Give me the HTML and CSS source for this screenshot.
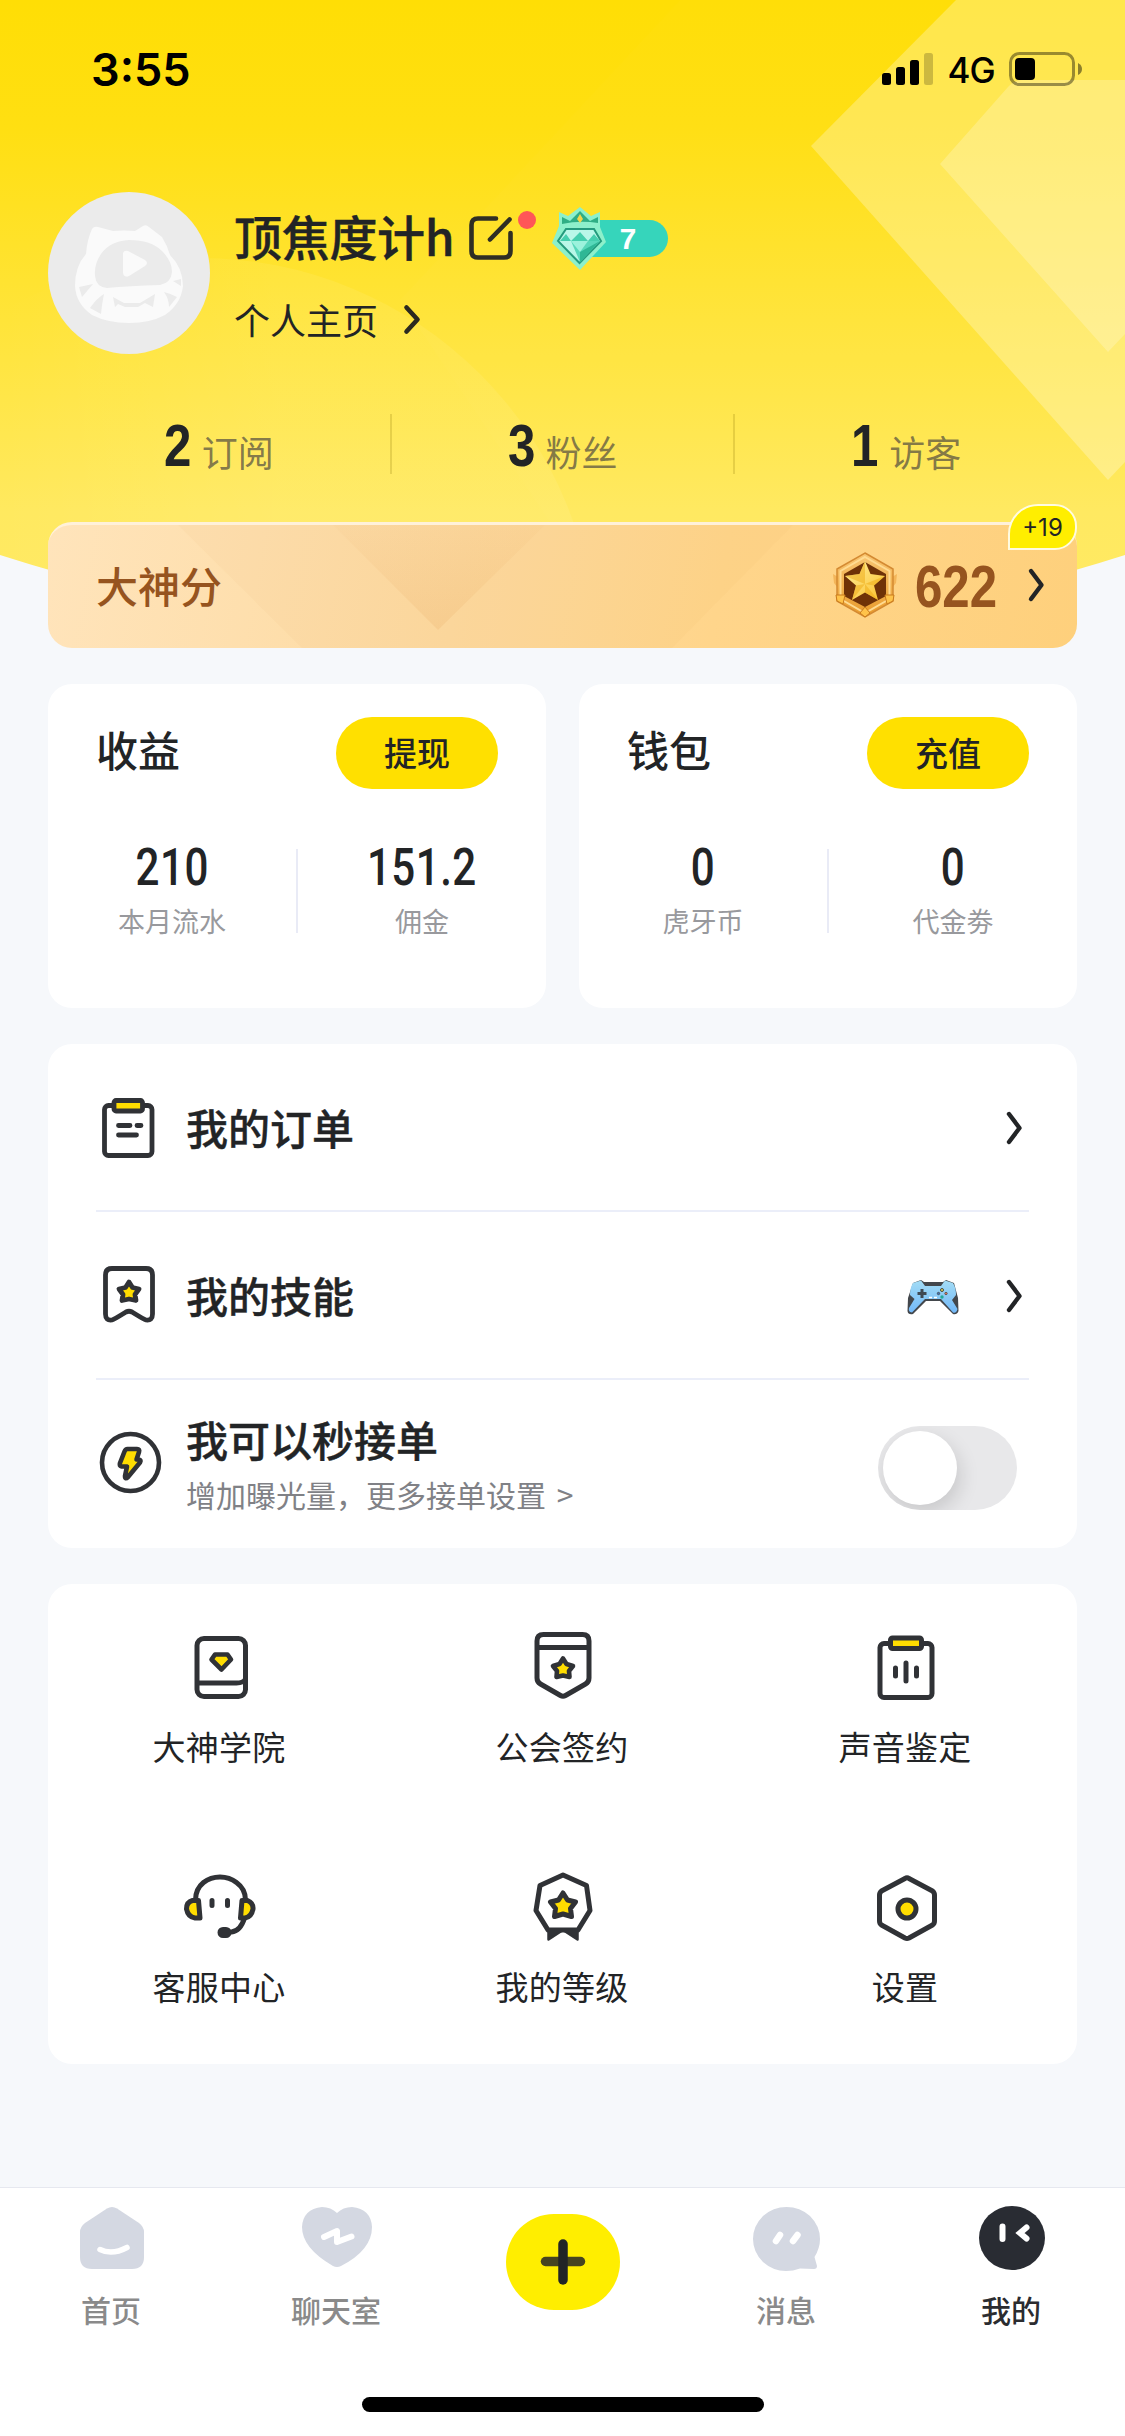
FILE: index.html
```html
<!DOCTYPE html>
<html lang="zh-CN">
<head>
<meta charset="utf-8">
<title>我的</title>
<link rel="stylesheet" href="styles.css">
</head>
<body>
<div class="page">
  <svg class="backdrop" viewBox="0 0 1125 640" aria-hidden="true">
    <defs>
      <linearGradient id="sky" x1="0" y1="0" x2="0" y2="1">
        <stop offset="0" stop-color="#ffde05"/>
        <stop offset=".2" stop-color="#ffdf12"/>
        <stop offset=".5" stop-color="#ffe439"/>
        <stop offset=".8" stop-color="#ffe95f"/>
        <stop offset="1" stop-color="#ffea66"/>
      </linearGradient>
      <linearGradient id="halo" x1="0" y1="0" x2="1" y2="0">
        <stop offset=".25" stop-color="#fff" stop-opacity="0"/>
        <stop offset=".6" stop-color="#fff" stop-opacity=".07"/>
      </linearGradient>
      <clipPath id="dome"><path d="M0 0H1125V555Q860 640 562 640Q265 640 0 555Z"/></clipPath>
    </defs>
    <g clip-path="url(#dome)">
      <rect width="1125" height="640" fill="url(#sky)"/>
      <path d="M680 0L400 300L562 540H1125V0Z" fill="#fff" opacity=".015"/>
      <circle cx="200" cy="654" r="396" fill="url(#halo)"/>
      <path d="M956 0L811 146L1108 480L1125 462V0Z" fill="#fff" opacity=".27"/>
      <path d="M1125 80H1022Q1014 80 1008 87L940 164L1108 352L1125 334Z" fill="#fff" opacity=".22"/>
    </g>
  </svg>

  <header class="status">
    <span class="clock">3:55</span>
    <div class="signals">
      <svg width="51" height="33" viewBox="882 53 51 33"><g fill="#000"><rect x="882" y="73" width="9" height="12" rx="2.5"/><rect x="896" y="67" width="9" height="18" rx="2.5"/><rect x="910" y="60" width="9" height="25" rx="2.5"/><rect x="924" y="53" width="9" height="32" rx="2.5" opacity=".2"/></g></svg>
      <span class="network">4G</span>
      <svg width="74" height="35" viewBox="1009 52 74 35"><rect x="1010.5" y="53.5" width="63" height="31" rx="9" fill="none" stroke="#000" stroke-opacity=".4" stroke-width="3"/><rect x="1015" y="58" width="20" height="22" rx="4"/><path d="M1078 63Q1082 65 1082 69Q1082 73 1078 75Z" opacity=".45"/></svg>
    </div>
  </header>

  <section class="profile">
    <svg class="avatar" width="162" height="162" viewBox="48 192 162 162">
      <circle cx="129" cy="273" r="81" fill="#ebebeb"/>
      <path d="M92 229Q94 226 98 227L113 231Q124 230 135 231L143 226Q146 224 149 227L162 237Q167 245 170 255Q183 268 183 286Q181 304 165 315Q150 323 129 323Q108 323 92 315Q76 304 75 286Q75 266 86 254Q87 240 92 229Z" fill="#fafafa"/>
      <path d="M129 240Q151 240 162 251Q172 261 172 272Q171 283 160 285Q129 286 107 288Q96 287 95 276Q94 264 101 254Q110 241 129 240Z" fill="#ebebeb"/>
      <path d="M123 253Q124 250 128 251L145 260Q149 263 145 266L129 276Q124 278 123 273Z" fill="#fafafa"/>
      <path d="M79 287L93 284L82 297ZM90 308Q97 298 104 294Q102 303 101 314ZM113 297L124 303H140L155 294L153 307L145 303L138 307H125L118 304L115 307ZM164 292Q172 294 177 297L169 307Q169 299 164 292ZM173 281L181 279V286Z" fill="#ebebeb"/>
    </svg>
    <div class="identity">
      <div class="name-row">
        <h1 class="name">顶焦度计h</h1>
        <svg class="edit" width="70" height="60" viewBox="469 208 70 60"><path d="M498 218.500H480Q473.500 218.500 473.500 225V251Q473.500 257.500 480 257.500H506Q512.500 257.500 512.500 251V233M511.500 219.500L492 239.500" fill="none" stroke="#2f2e24" stroke-width="4.600" stroke-linecap="round"/><circle cx="529" cy="220" r="9" fill="#ff5657"/></svg>
        <div class="level">
          <svg class="gem" width="56" height="66" viewBox="553 204 56 66">
            <path d="M561 211L570 215L582 206L593 215L602 211V226L608 241L582 269L554 242L561 225Z" fill="#8df0cb"/>
            <path d="M564 216L572 220L582 210L592 220L600 216V222Q582 219 564 223Z" fill="#2fae84"/>
            <path d="M582 213L585 218L582 222L579 218Z" fill="#f3d54a"/>
            <path d="M568 228H596L603 240L581.500 262L560 240Z" fill="#b9f7e8" stroke="#249a7d" stroke-width="2"/>
            <path d="M562 240L568 233L573 240ZM590 240L596 233L602 240ZM573 240L582 231L590 240Z" fill="#45cfae"/>
            <path d="M573 240H602L582 261Z" fill="#58d8ba"/><path d="M573 240H590L582 251Z" fill="#9cf2dc"/><path d="M582 251L602 240L582 261Z" fill="#2fb795"/>
          </svg>
          <span class="level-num">7</span>
        </div>
      </div>
      <a class="home-link">个人主页
        <svg width="19" height="31" viewBox="0 0 19 31"><path d="M3.500 3.500L14.500 15.500L3.500 27.500" fill="none" stroke="#2b2920" stroke-width="4.600" stroke-linecap="round" stroke-linejoin="round"/></svg>
      </a>
    </div>
  </section>

  <section class="stats">
    <div class="stat"><b class="tall">2</b><span>订阅</span></div>
    <div class="stat"><b class="tall">3</b><span>粉丝</span></div>
    <div class="stat"><b class="tall">1</b><span>访客</span></div>
  </section>

  <section class="score">
    <svg class="score-art" viewBox="48 525 1029 123" preserveAspectRatio="none">
      <defs><linearGradient id="vee" x1="0" y1="0" x2="0" y2="1"><stop offset="0" stop-color="#d98a3a" stop-opacity=".03"/><stop offset="1" stop-color="#d98a3a" stop-opacity=".13"/></linearGradient></defs>
      <path d="M178 525H793L672 648H302Z" fill="#e0954a" opacity=".05"/><path d="M333 525H545L438 630Z" fill="url(#vee)"/>
    </svg>
    <span class="score-label">大神分</span>
    <svg class="medal" width="66" height="70" viewBox="832 550 66 70">
      <defs><linearGradient id="gold" x1="0" y1="0" x2="0" y2="1"><stop offset="0" stop-color="#f9c774"/><stop offset="1" stop-color="#e89a2b"/></linearGradient><linearGradient id="starfill" x1="0" y1="0" x2="1" y2="1"><stop offset="0" stop-color="#fff0a0"/><stop offset="1" stop-color="#fbc02a"/></linearGradient></defs>
      <path d="M833 574L838 577V588L834 583ZM897 574L892 577V588L896 583Z" fill="#f4b65a"/>
      <path d="M865 553L893 569V601L865 617L837 601V569Z" fill="url(#gold)" stroke="#d48a32" stroke-width="1.500"/>
      <path d="M865 557L889.500 571V599L865 613L840.500 599V571Z" fill="none" stroke="#ffdb91" stroke-width="2"/>
      <path d="M865 562L886 574V596L865 607L844 596V574Z" fill="#6f3207"/>
      <path d="M865 561L870.500 574L885 576L874 585.500L878 600L865 592.500L852 600L856 585.500L845 576L859.500 574Z" fill="url(#starfill)"/>
      <path d="M865 561V584L859.500 574ZM885 576L865 584L874 585.500ZM878 600L865 584V592.500ZM852 600L865 584L856 585.500ZM845 576L865 584L859.500 574Z" fill="#eda914" opacity=".5"/>
      <path d="M836 595L845 595L843 604L837 601ZM894 595L885 595L887 604L893 601ZM860 613L865 607L870 613L865 617Z" fill="#ffc34a" stroke="#c97a1c" stroke-width="1"/>
    </svg>
    <b class="tall score-num">622</b>
    <svg class="chev" width="19" height="36" viewBox="0 0 19 36"><path d="M4 4L14.500 18L4 32" fill="none" stroke="#222426" stroke-width="4.400" stroke-linecap="round" stroke-linejoin="round"/></svg>
    <span class="bubble">+19</span>
  </section>

  <section class="cards">
    <article class="card money">
      <div class="money-head"><h2>收益</h2><button class="pill">提现</button></div>
      <div class="figures">
        <div class="figure"><b>210</b><span>本月流水</span></div>
        <div class="figure"><b>151.2</b><span>佣金</span></div>
      </div>
    </article>
    <article class="card money">
      <div class="money-head"><h2>钱包</h2><button class="pill">充值</button></div>
      <div class="figures">
        <div class="figure"><b>0</b><span>虎牙币</span></div>
        <div class="figure"><b>0</b><span>代金劵</span></div>
      </div>
    </article>
  </section>

  <section class="card list">
    <div class="row">
      <svg class="row-icon" width="70" height="72" viewBox="96 1092 70 72" fill="none" stroke="#303236" stroke-width="4.800" stroke-linecap="round" stroke-linejoin="round"><rect x="104.500" y="1105.500" width="47.500" height="50" rx="4"/><rect x="114" y="1100.500" width="28.500" height="10.500" rx="2" fill="#ffdd00"/><path d="M118.500 1125.500H130M137 1125.500H141M118.500 1135H136.500"/></svg>
      <span class="row-title">我的订单</span>
      <svg class="chev" width="19" height="36" viewBox="0 0 19 36"><path d="M4 4L14.500 18L4 32" fill="none" stroke="#222426" stroke-width="4.400" stroke-linecap="round" stroke-linejoin="round"/></svg>
    </div>
    <div class="row">
      <svg class="row-icon" width="70" height="72" viewBox="96 1260 70 72" fill="none" stroke="#303236" stroke-width="4.800" stroke-linecap="round" stroke-linejoin="round"><path d="M112 1268.500H146Q152.500 1268.500 152.500 1275V1314Q152.500 1321 146 1320Q144 1319.500 132 1312Q129 1310.500 126 1312Q114 1319.500 112 1320Q105.500 1321 105.500 1314V1275Q105.500 1268.500 112 1268.500Z"/><path d="M129 1282L132.500 1287.500L139 1289L135 1294.500L136 1300.500L129 1299L122 1300.500L123 1294.500L119 1289L125.500 1287.500Z" fill="#ffdd00"/></svg>
      <span class="row-title">我的技能</span>
      <svg class="pad" width="54" height="38" viewBox="906 1278 54 38">
        <defs><linearGradient id="padblue" x1="0" y1="0" x2="0" y2="1"><stop offset="0" stop-color="#a3dcf5"/><stop offset="1" stop-color="#72b8f8"/></linearGradient></defs>
        <path d="M913 1283L921 1280L924 1282H943L946 1280L954 1283L958 1298L958.500 1311Q957 1315 953 1314L940 1301H926L913 1314Q908 1315 907.500 1311L908 1298Z" fill="#43474c"/>
        <path d="M913 1283L921 1280.500L925 1286H941L945 1280.500L953 1283Q956 1288 956 1295L952 1300L957.500 1309Q956 1314 953 1312.500L941 1299H925L912 1312.500Q908 1312 909 1308L914.500 1299L910 1295Q910 1288 913 1283Z" fill="url(#padblue)"/>
        <path d="M922 1289V1298M917.500 1293.500H926.500" stroke="#3f4952" stroke-width="3"/><path d="M929 1297.500H932M934 1297.500H937" stroke="#fff" stroke-width="1.500"/>
        <circle cx="942" cy="1290" r="1.500" fill="#e7db58" stroke="#474b44"/><circle cx="946" cy="1293.500" r="1.200" fill="#f27b6b" stroke="#474b44" stroke-width=".8"/><circle cx="938.500" cy="1293.500" r="1.200" fill="#3d6dc0" stroke="#474b44" stroke-width=".8"/><circle cx="942" cy="1297" r="1.700" fill="#24a99a"/>
      </svg>
      <svg class="chev" width="19" height="36" viewBox="0 0 19 36"><path d="M4 4L14.500 18L4 32" fill="none" stroke="#222426" stroke-width="4.400" stroke-linecap="round" stroke-linejoin="round"/></svg>
    </div>
    <div class="row">
      <svg class="row-icon" width="70" height="72" viewBox="96 1428 70 72" fill="none" stroke="#303236" stroke-width="4.600" stroke-linejoin="round"><circle cx="130.500" cy="1462.500" r="28.500"/><path d="M127.500 1449H137Q140 1449 139 1452L136.500 1459.500H139Q141.500 1460 140 1462.500L128 1477Q125 1480 125 1476L127 1466.500H121.500Q119 1466 120 1463L124.500 1451.500Q125.500 1449 127.500 1449Z" fill="#ffdd00"/></svg>
      <div class="row-text"><span class="row-title">我可以秒接单</span><span class="row-sub">增加曝光量，更多接单设置 &gt;</span></div>
      <span class="toggle"><i class="knob"></i></span>
    </div>
  </section>

  <section class="card grid">
    <div class="tile">
      <svg width="80" height="80" viewBox="179.500 1627 80 80" fill="none" stroke="#303236" stroke-width="5" stroke-linejoin="round" stroke-linecap="round"><rect x="196.500" y="1638.500" width="48.500" height="58" rx="7"/><path d="M197 1683H236Q243 1683 245 1679"/><path d="M214.500 1654.500H227L230.500 1659.500L221 1669.500L211 1659.500Z" fill="#ffdd00" stroke-width="4.600"/></svg>
      <span>大神学院</span>
    </div>
    <div class="tile">
      <svg width="80" height="80" viewBox="522.500 1627 80 80" fill="none" stroke="#303236" stroke-width="5" stroke-linejoin="round"><path d="M543 1634.500H582Q588.500 1634.500 588.500 1641V1678Q588.500 1682 585 1684L565 1695.500Q562.500 1697 560 1695.500L540 1684Q536.500 1682 536.500 1678V1641Q536.500 1634.500 543 1634.500ZM537 1647.500H588"/><path d="M562.500 1658.500L566 1664L572.500 1666L568.500 1671L569 1677L562.500 1675.500L556 1677L556.500 1671L552.500 1666L559 1664Z" fill="#ffdd00" stroke-width="4.600"/></svg>
      <span>公会签约</span>
    </div>
    <div class="tile">
      <svg width="80" height="80" viewBox="865.500 1627 80 80" fill="none" stroke="#303236" stroke-width="5" stroke-linejoin="round" stroke-linecap="round"><rect x="879.500" y="1643.500" width="52" height="54" rx="4"/><rect x="890" y="1638" width="31" height="10.500" rx="2" fill="#ffdd00"/><path d="M895 1668V1676M905.500 1663V1681M916 1668V1676"/></svg>
      <span>声音鉴定</span>
    </div>
    <div class="tile">
      <svg width="80" height="80" viewBox="179.500 1867 80 80" fill="none" stroke="#303236" stroke-width="5" stroke-linejoin="round" stroke-linecap="round"><path d="M195 1900Q195 1889 203 1882.500Q210 1877 219.500 1877Q229 1877 236 1882.500Q245 1889 245 1900M244 1918Q240 1931 231 1932"/><path d="M192 1900.500H198L199.500 1918H194.500Q187.500 1917 186 1909Q186 1902 192 1900.500ZM241.500 1900.500H247Q253 1903 252.500 1909Q251 1917 244.500 1918H240Z" fill="#ffdd00"/><path d="M211.500 1900.500V1905.500M227 1900.500V1905.500"/><rect x="219.500" y="1929.500" width="9" height="6" rx="3" fill="#303236"/></svg>
      <span>客服中心</span>
    </div>
    <div class="tile">
      <svg width="80" height="80" viewBox="522.500 1867 80 80" fill="none" stroke="#303236" stroke-width="5" stroke-linejoin="round"><path d="M548 1929V1939.500L562.500 1930L577 1939.500V1929Z" fill="#303236" stroke-width="2.500"/><path d="M562.500 1875L586 1885.500L589.500 1910.500L577.500 1930H547.500L535.500 1910.500L539.500 1885.500Z" fill="#fff"/><path d="M562.500 1893L567 1900L575 1902L570 1908.500L571 1916.500L562.500 1914L554 1916.500L555 1908.500L550 1902L558 1900Z" fill="#ffdd00"/></svg>
      <span>我的等级</span>
    </div>
    <div class="tile">
      <svg width="80" height="80" viewBox="865.500 1867 80 80" fill="none" stroke="#303236" stroke-width="5" stroke-linejoin="round"><path d="M904.500 1878.500Q906.500 1877 908.500 1878.500L932 1891Q934 1892.500 934 1895V1921Q934 1923.500 932 1925L908.500 1938Q906.500 1939 904.500 1938L881 1925Q879 1923.500 879 1921V1895Q879 1892.500 881 1891Z"/><circle cx="906.500" cy="1909" r="9" fill="#ffdd00"/></svg>
      <span>设置</span>
    </div>
  </section>

  <nav class="tabs">
    <div class="tab">
      <svg width="72" height="72" viewBox="75 2202 72 72"><path d="M107 2208.500Q112 2205.500 117 2208.500L139 2223Q144 2227 144 2232V2257Q144 2269 132 2269H92Q80 2269 80 2257V2232Q80 2227 85 2223Z" fill="#d4d8e2"/><path d="M100 2249.500Q112 2255.500 127 2247.500" fill="none" stroke="#fff" stroke-width="5.500" stroke-linecap="round"/></svg>
      <span>首页</span>
    </div>
    <div class="tab">
      <svg width="76" height="72" viewBox="298 2202 76 72"><path d="M337 2213Q343 2207 352 2207Q371 2209 372 2227Q372 2250 341 2266Q337 2268 333 2266Q302 2248 302 2227Q303 2209 322 2207Q331 2207 337 2213Z" fill="#d4d8e2"/><path d="M324 2237L337 2231V2242L351.500 2236.500" fill="none" stroke="#fff" stroke-width="6" stroke-linecap="round" stroke-linejoin="round"/></svg>
      <span>聊天室</span>
    </div>
    <div class="tab"><button class="add" aria-label="发布"><svg width="46" height="46" viewBox="0 0 46 46"><path d="M5.500 22.500H40.500" stroke="#464420" stroke-width="9.500" stroke-linecap="round"/><path d="M23 5V41" stroke="#222426" stroke-width="9.500" stroke-linecap="round"/></svg></button></div>
    <div class="tab">
      <svg width="72" height="72" viewBox="750 2202 72 72"><path d="M786.500 2207Q800 2207 810 2216Q820 2226 820 2239Q820 2248 814.500 2257L817 2266Q817 2269 814 2269L800 2268.500Q793 2271 786 2271Q773 2271 763 2262Q753 2252 753 2239Q753 2226 763 2216Q773 2207 786.500 2207Z" fill="#d4d8e2"/><path d="M780 2235L776 2241M797.500 2235L793 2241" stroke="#fff" stroke-width="6.500" stroke-linecap="round"/></svg>
      <span>消息</span>
    </div>
    <div class="tab active">
      <svg width="72" height="72" viewBox="975 2202 72 72"><ellipse cx="1012" cy="2238" rx="33" ry="32" fill="#292c33"/><path d="M1002.500 2226.500V2239M1026.500 2227.500L1020 2233L1026.500 2238.500" fill="none" stroke="#fff" stroke-width="6" stroke-linecap="round"/></svg>
      <span>我的</span>
    </div>
    <i class="home-bar"></i>
  </nav>
</div>
</body>
</html>
```
FILE: styles.css
```css
* { box-sizing: border-box; margin: 0; padding: 0; }
body {
  width: 1125px;
  background: #f6f8fb;
  color: #222426;
  font-family: "Noto Sans CJK SC", "Inter", sans-serif;
}
svg { display: block; flex: none; }
button { border: 0; font: inherit; color: inherit; }
.page {
  position: relative;
  display: flex;
  flex-direction: column;
  height: 2436px;
  overflow: hidden;
}
.page > * { flex: none; }
.backdrop { position: absolute; left: 0; top: 0; width: 1125px; height: 640px; }

.status {
  position: relative;
  display: flex;
  justify-content: space-between;
  align-items: center;
  height: 138px;
  padding: 0 42px 0 91px;
  color: #000;
  font-family: "Inter", sans-serif;
}
.clock { font-size: 45px; font-weight: 600; }
.signals { display: flex; align-items: center; }
.network { width: 76px; padding-top: 2px; text-align: center; font-size: 35px; font-weight: 500; letter-spacing: -1px; }

.profile { position: relative; display: flex; margin-top: 54px; padding-left: 48px; }
.identity { display: flex; flex-direction: column; padding-left: 24px; }
.name-row { display: flex; align-items: center; height: 92px; }
.name { width: 219px; height: 92px; font-size: 48px; font-weight: 500; line-height: 86px; letter-spacing: -.3px; white-space: nowrap; -webkit-text-stroke: .4px; }
.edit { margin-left: 14px; }
.level { display: flex; align-items: center; height: 66px; margin-left: 14px; }
.gem { position: relative; z-index: 1; }
.level-num {
  width: 88px;
  height: 37px;
  margin-left: -27px;
  padding: 1px 0 0 8px;
  border-radius: 0 19px 19px 0;
  background: #36d5bb;
  color: #fff;
  font: bold 30px/40px "Liberation Mono", monospace;
  text-align: center;
}
.home-link { display: flex; align-items: center; gap: 25px; height: 70px; font-size: 36px; line-height: 70px; }

.stats { position: relative; display: flex; height: 60px; margin: 60px 48px 0; }
.stat { flex: 1; display: flex; justify-content: center; align-items: baseline; gap: 10px; padding-top: 2px; line-height: 60px; }
.stat + .stat { border-left: 2px solid rgba(130, 110, 0, .2); }
.stat span { font-size: 36px; color: rgba(50, 48, 60, .6); transform: translateY(1px); }
.tall {
  width: 28px;
  font-family: "Liberation Sans", sans-serif;
  font-size: 60px;
  font-weight: 700;
  transform: scaleX(.82);
  transform-origin: left;
}

.score {
  position: relative;
  display: flex;
  align-items: center;
  height: 126px;
  margin: 48px 48px 0;
  padding: 0 31px 0 48px;
  border-top: 3px solid #fff1da;
  border-radius: 24px;
  background: linear-gradient(100deg, #ffe4bb, #fddaa0 40%, #ffd58b 65%, #fed07c);
  color: #96541f;
}
.score-art { position: absolute; left: 0; top: 0; width: 100%; height: 100%; }
.score-label { flex: 1; padding-bottom: 5px; font-size: 42px; font-weight: 500; }
.medal { margin-bottom: 3px; }
.score-num { width: 82px; margin-left: 17px; }
.score .chev { margin: 0 0 3px 30px; }
.bubble {
  position: absolute;
  right: 0;
  top: -21px;
  width: 69px;
  height: 46px;
  border: 2px solid #fffbe0;
  border-radius: 30px 22px 22px 0;
  background: #ffee00;
  color: #222426;
  font: 24px/43px "Inter", sans-serif;
  text-align: center;
}

.card { background: #fff; border-radius: 24px; }
.cards { display: grid; grid-template-columns: 1fr 1fr; gap: 33px; margin: 36px 48px 0; }
.money { height: 324px; padding-top: 33px; }
.money-head { display: flex; justify-content: space-between; align-items: center; height: 72px; padding: 0 48px; }
.money-head h2 { font-size: 42px; font-weight: 500; line-height: 64px; padding-bottom: 8px; }
.pill { width: 162px; height: 72px; padding-bottom: 3px; border-radius: 36px; background: #ffe000; font-size: 33px; font-weight: 500; }
.figures { display: flex; margin-top: 60px; }
.figure { flex: 1; display: flex; flex-direction: column; align-items: center; height: 84px; }
.figure + .figure { border-left: 2px solid #e9ebf6; }
.figure b { font: 500 52px/38px "Roboto", sans-serif; letter-spacing: .6px; transform: scaleX(.81); }
.figure span { margin-top: 15px; font-size: 27px; line-height: 38px; color: #98999d; }

.list { height: 504px; margin: 36px 48px 0; padding: 0 48px; }
.row { display: flex; align-items: center; height: 168px; }
.row + .row { box-shadow: 0 -2px #ebeef9; }
.row-icon { margin-right: 20px; }
.row-title { flex: 1; padding-bottom: 2px; font-size: 42px; font-weight: 500; line-height: 60px; -webkit-text-stroke: .4px; }
.row .chev { margin-right: 5px; }
.pad { margin: 2px 45px 0 0; }
.row-text { flex: 1; display: flex; flex-direction: column; padding-bottom: 2px; }
.row-sub { font-size: 30px; line-height: 46px; color: #808186; word-spacing: 4px; }
.toggle { width: 139px; height: 84px; margin: 8px 12px 0 0; padding: 5px; border-radius: 42px; background: #e8e8ea; overflow: hidden; }
.knob { display: block; width: 74px; height: 74px; border-radius: 50%; background: #fff; box-shadow: 3px 8px 20px rgba(0, 0, 0, .14); }

.grid { display: grid; grid-template-columns: repeat(3, 1fr); grid-auto-rows: 240px; height: 480px; margin: 36px 48px 0; }
.tile { display: flex; flex-direction: column; align-items: center; padding-top: 43px; font-size: 33px; line-height: 50px; }
.tile span { margin: 14px 1px 0 0; letter-spacing: .3px; }

.tabs {
  position: relative;
  display: flex;
  height: 249px;
  margin-top: auto;
  border-top: 1px solid #e6e8ef;
  background: #fff;
}
.tab { flex: 1; display: flex; flex-direction: column; align-items: center; padding: 14px 3px 0 0; font-size: 30px; font-weight: 500; line-height: 44px; color: #8a8a8a; }
.tab span { margin-top: 13px; }
.tab.active { color: #2b2c30; }
.add { display: flex; align-items: center; justify-content: center; width: 114px; height: 96px; margin: 12px 0 0 3px; border-radius: 48px; background: #ffee00; }
.home-bar { position: absolute; left: 362px; top: 209px; width: 402px; height: 15px; border-radius: 8px; background: #000; }
```
